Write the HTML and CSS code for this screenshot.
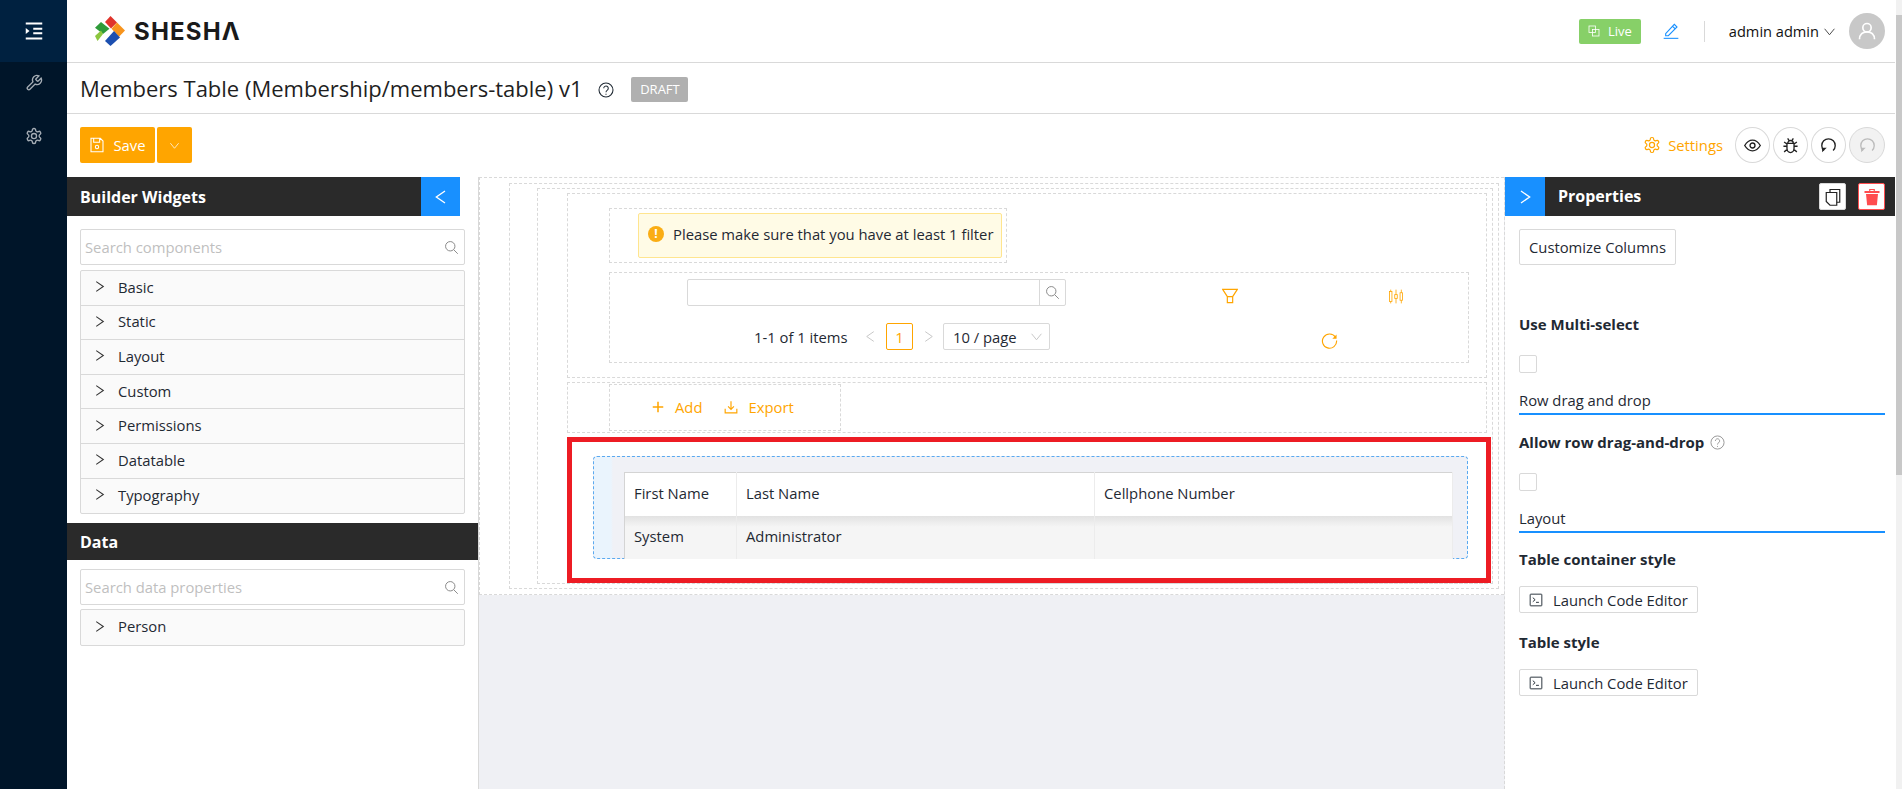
FILE: index.html
```html
<!DOCTYPE html>
<html lang="en">
<head>
  <meta charset="UTF-8" />
  <title>Members Table</title>
  <link rel="stylesheet" href="styles.css">
</head>
<body>

  <svg class="sprite" xmlns="http://www.w3.org/2000/svg">
    <symbol id="i-search" viewBox="0 0 24 24"><circle cx="10" cy="10" r="7.5"/><path d="M15.5 15.5 22 22"/></symbol>
    <symbol id="i-right" viewBox="0 0 24 24"><path d="M6 3l13 9-13 9"/></symbol>
    <symbol id="i-left" viewBox="0 0 24 24"><path d="M18 3 5 12l13 9"/></symbol>
    <symbol id="i-down" viewBox="0 0 24 24"><path d="M3 7l9 11 9-11"/></symbol>
    <symbol id="i-gear" viewBox="0 0 24 24"><path d="M12.22 2h-.44a2 2 0 0 0-2 2v.18a2 2 0 0 1-1 1.73l-.43.25a2 2 0 0 1-2 0l-.15-.08a2 2 0 0 0-2.73.73l-.22.38a2 2 0 0 0 .73 2.73l.15.1a2 2 0 0 1 1 1.72v.51a2 2 0 0 1-1 1.74l-.15.09a2 2 0 0 0-.73 2.73l.22.38a2 2 0 0 0 2.73.73l.15-.08a2 2 0 0 1 2 0l.43.25a2 2 0 0 1 1 1.73V20a2 2 0 0 0 2 2h.44a2 2 0 0 0 2-2v-.18a2 2 0 0 1 1-1.73l.43-.25a2 2 0 0 1 2 0l.15.08a2 2 0 0 0 2.73-.73l.22-.39a2 2 0 0 0-.73-2.73l-.15-.08a2 2 0 0 1-1-1.74v-.5a2 2 0 0 1 1-1.74l.15-.09a2 2 0 0 0 .73-2.73l-.22-.38a2 2 0 0 0-2.73-.73l-.15.08a2 2 0 0 1-2 0l-.43-.25a2 2 0 0 1-1-1.73V4a2 2 0 0 0-2-2z"/><circle cx="12" cy="12" r="3.4"/></symbol>
    <symbol id="i-help" viewBox="0 0 24 24"><circle cx="12" cy="12" r="10.5"/><path d="M8.6 9.4a3.4 3.4 0 1 1 5.4 2.8c-1.3.9-2 1.500-2 3"/><path d="M12 17.500v1.500"/></symbol>
    <symbol id="i-terminal" viewBox="0 0 24 24"><rect x="2" y="2" width="20" height="20" rx="1"/><path d="M6.500 8l4 3.500-4 3.500M12 16h5"/></symbol>
    <symbol id="i-reload" viewBox="0 0 24 24"><path d="M20.500 7.500A10 10 0 1 0 22 12"/><path class="solid" d="M22 3.500v6h-6z"/></symbol>
    <symbol id="i-undo" viewBox="0 0 24 24"><path d="M5.500 19a9.500 9.500 0 1 1 13 0"/><path class="solid" d="M3 21.500v-6.500h6.500z"/></symbol>
  </svg>

  <div class="app">

    <nav class="rail">
      <div class="rail-top">
        <svg class="rail-icon menu" viewBox="0 0 24 24"><path d="M1 2h22M11 9h12M11 15h12M1 22h22"/><path class="solid" d="M1 8l5 4-5 4z"/></svg>
      </div>
      <svg class="rail-icon dim" viewBox="0 0 24 24"><path d="M14.700 6.300a1 1 0 0 0 0 1.400l1.600 1.600a1 1 0 0 0 1.400 0l3.770-3.770a6 6 0 0 1-7.940 7.940l-6.910 6.910a2.120 2.120 0 0 1-3-3l6.910-6.910a6 6 0 0 1 7.940-7.940l-3.760 3.760z"/></svg>
      <svg class="rail-icon dim" viewBox="0 0 24 24"><use href="#i-gear"/></svg>
    </nav>

    <main class="main">

      <header class="topbar">
        <div class="brand">
          <svg class="logo" viewBox="0 0 30 30">
            <path fill="#e0342b" d="M15.500 0 22 6.500 16 12.500 10 6z"/>
            <path fill="#f7941d" d="M22 6.500 30 14.500 24 20.700 16.500 12.700z"/>
            <path fill="#2f9b3a" d="M0 11.700 6 6 14.500 12.700 8 18z"/>
            <path fill="#8cc63f" d="M0 20 6 14.500 8 18 2.500 25z"/>
            <path fill="#1c4fb0" d="M10 25 19 15 25 21.400 15.500 30z"/>
          </svg>
          <span class="brand-name">SHESHΛ</span>
        </div>
        <div class="topbar-right">
          <span class="live">
            <svg viewBox="0 0 24 24"><rect x="2" y="2" width="13" height="13"/><rect x="9" y="9" width="13" height="13"/></svg>
            Live
          </span>
          <svg class="edit" viewBox="0 0 24 24"><path d="M4 16 17 2l4 4L8 19H4zM14.500 5l4 4"/><path d="M1 23h22"/></svg>
          <span class="vline"></span>
          <span class="user">admin admin</span>
          <svg class="user-caret" viewBox="0 0 24 24"><use href="#i-down"/></svg>
          <span class="avatar">
            <svg viewBox="0 0 24 24"><circle cx="12" cy="8" r="5"/><path d="M3 22c0-6 4-9 9-9s9 3 9 9"/></svg>
          </span>
        </div>
      </header>

      <div class="titlebar">
        <h1>Members Table (Membership/members-table) v1</h1>
        <svg class="title-help" viewBox="0 0 24 24"><use href="#i-help"/></svg>
        <span class="draft">DRAFT</span>
      </div>

      <div class="toolbar">
        <div class="save-group">
          <button class="btn-save">
            <svg viewBox="0 0 24 24"><path d="M3 2h14l4 4v16H3zM7 2v6h9V2"/><circle cx="12" cy="15" r="2.500"/></svg>
            Save
          </button>
          <button class="btn-save-more"><svg viewBox="0 0 24 24"><use href="#i-down"/></svg></button>
        </div>
        <div class="toolbar-right">
          <span class="settings">
            <svg viewBox="0 0 24 24"><use href="#i-gear"/></svg>
            Settings
          </span>
          <button class="round">
            <svg viewBox="0 0 24 24"><path d="M1 12c3-5 7-7.500 11-7.500S20 7 23 12c-3 5-7 7.500-11 7.500S4 17 1 12z"/><circle cx="12" cy="12" r="3.500"/></svg>
          </button>
          <button class="round">
            <svg viewBox="0 0 24 24"><path d="M7 9h10v7a5 6 0 0 1-10 0zM8 9a4 4 0 0 1 8 0M2 13h5M17 13h5M3 7l4 3M21 7l-4 3M3 21l5-4M21 21l-5-4M8 2l2 3M16 2l-2 3"/></svg>
          </button>
          <button class="round"><svg viewBox="0 0 24 24"><use href="#i-undo"/></svg></button>
          <button class="round off"><svg viewBox="0 0 24 24"><use href="#i-undo"/></svg></button>
        </div>
      </div>

      <div class="builder">

        <aside class="widgets">
          <div class="panel-head">
            <span class="panel-title">Builder Widgets</span>
            <span class="panel-toggle"><svg viewBox="0 0 24 24"><use href="#i-left"/></svg></span>
          </div>
          <div class="widgets-body">
            <div class="search">
              <span>Search components</span>
              <svg viewBox="0 0 24 24"><use href="#i-search"/></svg>
            </div>
            <ul class="group-list">
              <li><svg viewBox="0 0 24 24"><use href="#i-right"/></svg>Basic</li>
              <li><svg viewBox="0 0 24 24"><use href="#i-right"/></svg>Static</li>
              <li><svg viewBox="0 0 24 24"><use href="#i-right"/></svg>Layout</li>
              <li><svg viewBox="0 0 24 24"><use href="#i-right"/></svg>Custom</li>
              <li><svg viewBox="0 0 24 24"><use href="#i-right"/></svg>Permissions</li>
              <li><svg viewBox="0 0 24 24"><use href="#i-right"/></svg>Datatable</li>
              <li><svg viewBox="0 0 24 24"><use href="#i-right"/></svg>Typography</li>
            </ul>
          </div>
          <div class="data-head">Data</div>
          <div class="widgets-body data-body">
            <div class="search">
              <span>Search data properties</span>
              <svg viewBox="0 0 24 24"><use href="#i-search"/></svg>
            </div>
            <ul class="group-list">
              <li><svg viewBox="0 0 24 24"><use href="#i-right"/></svg>Person</li>
            </ul>
          </div>
        </aside>

        <section class="stage">
          <div class="canvas">
            <div class="zone zone-one">
              <div class="zone zone-two">

                <div class="zone zone-filters">
                  <div class="zone alert-zone">
                    <div class="alert">
                      <span class="alert-icon">!</span>
                      Please make sure that you have at least 1 filter
                    </div>
                  </div>
                  <div class="zone controls-zone">
                    <div class="controls-row">
                      <div class="quick-search">
                        <span class="quick-input"></span>
                        <span class="quick-btn"><svg viewBox="0 0 24 24"><use href="#i-search"/></svg></span>
                      </div>
                      <svg class="filter-icon" viewBox="0 0 24 24"><path d="M1 2h22l-7 11H8zM8 13h8v9H8z"/></svg>
                      <svg class="columns-icon" viewBox="0 0 24 24"><path d="M3.500 1v3M3.500 20v3M12 1v8M12 15v8M20.500 1v5M20.500 18v5"/><rect x="1.500" y="4" width="4" height="16"/><rect x="10" y="9" width="4" height="6"/><rect x="18.500" y="6" width="4" height="12"/></svg>
                    </div>
                    <div class="pager-row">
                      <span class="pager-total">1-1 of 1 items</span>
                      <svg class="pager-arrow" viewBox="0 0 24 24"><use href="#i-left"/></svg>
                      <span class="pager-page">1</span>
                      <svg class="pager-arrow" viewBox="0 0 24 24"><use href="#i-right"/></svg>
                      <span class="pager-size">10 / page<svg viewBox="0 0 24 24"><use href="#i-down"/></svg></span>
                      <svg class="reload-icon" viewBox="0 0 24 24"><use href="#i-reload"/></svg>
                    </div>
                  </div>
                </div>

                <div class="zone zone-actions">
                  <div class="zone actions-zone">
                    <span class="action">
                      <svg class="plus" viewBox="0 0 24 24"><path d="M12 3v18M3 12h18"/></svg>
                      Add
                    </span>
                    <span class="action">
                      <svg viewBox="0 0 24 24"><path d="M12 2v14M7 11l5 5 5-5M2 15v7h20v-7"/></svg>
                      Export
                    </span>
                  </div>
                </div>

                <div class="zone zone-table">
                  <div class="table-drop">
                    <table class="grid">
                      <thead>
                        <tr><th class="col-first">First Name</th><th class="col-last">Last Name</th><th>Cellphone Number</th></tr>
                      </thead>
                      <tbody>
                        <tr><td>System</td><td>Administrator</td><td></td></tr>
                      </tbody>
                    </table>
                  </div>
                  <div class="red-mark"></div>
                </div>

              </div>
            </div>
          </div>
        </section>

        <aside class="props">
          <div class="panel-head">
            <span class="panel-toggle wide"><svg viewBox="0 0 24 24"><use href="#i-right"/></svg></span>
            <span class="panel-title">Properties</span>
            <span class="head-btn">
              <svg viewBox="0 0 24 24"><path d="M8 6V2h13v17h-4"/><path d="M3 6h14v17H8l-5-5z"/></svg>
            </span>
            <span class="head-btn danger">
              <svg viewBox="0 0 24 24"><path class="solid" d="M4 8h16l-1.500 15h-13zM2 4h20v2.500H2z"/><path d="M9 4V2h6v2"/></svg>
            </span>
          </div>
          <div class="props-body">
            <button class="btn-plain tall">Customize Columns</button>
            <div class="prop-label first">Use Multi-select</div>
            <span class="check"></span>
            <div class="prop-section">Row drag and drop</div>
            <div class="prop-label">Allow row drag-and-drop <svg class="prop-help" viewBox="0 0 24 24"><use href="#i-help"/></svg></div>
            <span class="check"></span>
            <div class="prop-section">Layout</div>
            <div class="prop-label for-btn">Table container style</div>
            <button class="btn-plain"><svg viewBox="0 0 24 24"><use href="#i-terminal"/></svg>Launch Code Editor</button>
            <div class="prop-label for-btn">Table style</div>
            <button class="btn-plain"><svg viewBox="0 0 24 24"><use href="#i-terminal"/></svg>Launch Code Editor</button>
          </div>
        </aside>

      </div>
    </main>

    <div class="scrollbar"><div class="scroll-thumb"></div></div>
  </div>

</body>
</html>
```

FILE: styles.css
```css
* {
  box-sizing: border-box;
}
html, body {
  margin: 0;
  height: 100%;
  overflow: hidden;
}
body {
  font-family: 'Open Sans', 'Noto Sans', sans-serif;
  font-size: 14.8px;
  color: #1f2933;
  background: #fff;
}
svg {
  fill: none;
  stroke: currentColor;
  stroke-width: 1.6;
  display: block;
}
svg .solid {
  fill: currentColor;
  stroke: none;
}
.sprite {
  display: none;
}
button {
  font: inherit;
  margin: 0;
  cursor: pointer;
}
ul {
  list-style: none;
  margin: 0;
  padding: 0;
}

.app {
  display: flex;
  height: 789px;
}

/* left rail */
.rail {
  width: 67px;
  flex: none;
  background: #001529;
  color: #fff;
}
.rail-top {
  height: 62px;
  background: #002140;
  display: flex;
  align-items: center;
  justify-content: center;
  margin-bottom: 12px;
}
.rail-icon {
  width: 18px;
  height: 18px;
  stroke-width: 1.8;
}
.rail-icon.menu {
  stroke-width: 2.4;
}
.rail-icon.dim {
  color: #a5adb5;
  margin: 0 auto 35px;
}

.main {
  flex: 1;
  min-width: 0;
  display: flex;
  flex-direction: column;
}

/* top bar */
.topbar {
  height: 63px;
  flex: none;
  border-bottom: 1px solid #d9d9d9;
  display: flex;
  align-items: center;
  justify-content: space-between;
  padding: 0 10px 0 28px;
}
.brand {
  display: flex;
  align-items: center;
  gap: 9px;
}
.logo {
  width: 30px;
  height: 30px;
  stroke: none;
}
.brand-name {
  font-family: 'Inter', sans-serif;
  font-weight: 700;
  font-size: 24px;
  letter-spacing: 1.2px;
  color: #1a1a1a;
}
.topbar-right {
  display: flex;
  align-items: center;
}
.live {
  width: 62px;
  height: 25px;
  background: #87d068;
  color: #fff;
  border-radius: 2px;
  font-size: 13px;
  display: flex;
  align-items: center;
  justify-content: center;
  gap: 8px;
}
.live svg {
  width: 12px;
  height: 12px;
}
.edit {
  width: 16px;
  height: 16px;
  color: #1890ff;
  margin: 0 25px 0 22px;
}
.vline {
  width: 1px;
  height: 21px;
  background: #d9d9d9;
  margin-right: 24px;
}
.user {
  color: #111;
  font-size: 14.6px;
}
.user-caret {
  width: 13px;
  height: 13px;
  margin: 0 13px 0 4px;
  color: #333;
}
.avatar {
  width: 36px;
  height: 36px;
  border-radius: 50%;
  background: #c8c8c8;
  color: #fff;
  display: flex;
  align-items: center;
  justify-content: center;
}
.avatar svg {
  width: 20px;
  height: 20px;
  stroke-width: 2;
}

/* title */
.titlebar {
  height: 51px;
  flex: none;
  border-bottom: 1px solid #d9d9d9;
  display: flex;
  align-items: center;
  padding-left: 13px;
}
h1 {
  margin: 0;
  font-size: 22px;
  font-weight: 500;
  color: #1f1f1f;
  white-space: nowrap;
}
.title-help {
  width: 16px;
  height: 16px;
  margin: 4px 0 0 16px;
}
.draft {
  margin: 2px 0 0 17px;
  width: 57px;
  height: 25px;
  background: #b0b0b0;
  color: #fff;
  font-size: 13px;
  border-radius: 2px;
  display: flex;
  align-items: center;
  justify-content: center;
}

/* toolbar */
.toolbar {
  height: 63px;
  flex: none;
  display: flex;
  align-items: flex-start;
  justify-content: space-between;
  padding: 13px 10px 0 13px;
}
.save-group {
  display: flex;
  gap: 2px;
}
.btn-save, .btn-save-more {
  height: 36px;
  padding: 0;
  background: #ffa500;
  color: #fff;
  border: 0;
  border-radius: 2px;
  display: flex;
  align-items: center;
  justify-content: center;
}
.btn-save {
  width: 75px;
  gap: 8px;
}
.btn-save svg {
  width: 16px;
  height: 16px;
}
.btn-save-more {
  width: 35px;
}
.btn-save-more svg {
  width: 11px;
  height: 11px;
}
.toolbar-right {
  display: flex;
  align-items: center;
  gap: 3px;
}
.settings {
  color: #ffa500;
  display: flex;
  align-items: center;
  gap: 7px;
  margin-right: 9px;
}
.settings svg {
  width: 18px;
  height: 18px;
}
.round {
  width: 35px;
  height: 36px;
  padding: 0;
  border-radius: 50%;
  border: 1px solid #d9d9d9;
  background: #fff;
  color: #222;
  display: flex;
  align-items: center;
  justify-content: center;
}
.round svg {
  width: 17px;
  height: 17px;
  stroke-width: 1.9;
}
.round.off {
  width: 36px;
  background: #f2f2f2;
  color: #bbb;
}

/* builder row */
.builder {
  flex: 1;
  display: flex;
  min-height: 0;
}
.panel-head {
  height: 39px;
  flex: none;
  background: #2a2a2a;
  color: #fff;
  display: flex;
  align-items: center;
}
.panel-title {
  font-weight: 700;
  font-size: 16px;
}
.panel-toggle {
  width: 39px;
  height: 39px;
  background: #1890ff;
  display: flex;
  align-items: center;
  justify-content: center;
}
.panel-toggle.wide {
  width: 40px;
  margin-right: 13px;
}
.panel-toggle svg {
  width: 16px;
  height: 16px;
  stroke-width: 2;
}

/* widgets panel */
.widgets {
  width: 412px;
  flex: none;
  border-right: 1px solid #d9d9d9;
}
.widgets > .panel-head {
  width: 393px;
  justify-content: space-between;
  padding-left: 13px;
}
.widgets-body {
  padding: 13px 13px 9px;
}
.search {
  height: 36px;
  border: 1px solid #d9d9d9;
  border-radius: 2px;
  display: flex;
  align-items: center;
  justify-content: space-between;
  padding: 0 5px 0 4px;
  color: #bfbfbf;
}
.search svg {
  width: 15px;
  height: 15px;
  color: #8c8c8c;
}
.group-list {
  margin-top: 5px;
  border: 1px solid #d9d9d9;
  border-radius: 2px;
  background: #fafafa;
}
.group-list li {
  height: 34.600px;
  display: flex;
  align-items: center;
  padding: 0 0 2px 12px;
  border-bottom: 1px solid #d9d9d9;
}
.group-list li:last-child {
  border-bottom: 0;
}
.group-list li svg {
  width: 13px;
  height: 13px;
  margin-right: 12px;
  color: #333;
  stroke-width: 2;
}
.data-head {
  height: 37px;
  background: #2a2a2a;
  color: #fff;
  font-weight: 700;
  font-size: 16px;
  display: flex;
  align-items: center;
  padding-left: 13px;
}
.data-body {
  padding-top: 9px;
}
.data-body .group-list {
  margin-top: 4px;
}

/* canvas */
.stage {
  flex: 1;
  min-width: 0;
  background: #eff0f4;
  border-right: 1px dashed #d9d9d9;
}
.canvas {
  height: 418px;
  background: #fff;
  border: 1px dashed #d9d9d9;
  border-right: 0;
  padding: 5px 5px 5px 29px;
}
.zone {
  border: 1px dashed #d9d9d9;
}
.zone-one {
  height: 100%;
  padding: 4px 5px 4px 27px;
}
.zone-two {
  height: 100%;
  padding: 4px 5px 0 29px;
}
.zone-filters {
  height: 185px;
  padding: 14px 17px 0 41px;
}
.alert-zone {
  width: 398px;
  height: 55px;
  padding: 4px 4px 0 28px;
}
.alert {
  height: 45px;
  background: #fffbe6;
  border: 1px solid #ffe58f;
  border-radius: 2px;
  display: flex;
  align-items: center;
  padding: 0 0 4px 9px;
  gap: 9px;
  white-space: nowrap;
}
.alert-icon {
  width: 16px;
  height: 16px;
  border-radius: 50%;
  background: #faad14;
  color: #fff;
  font-size: 12px;
  font-weight: 700;
  display: flex;
  align-items: center;
  justify-content: center;
}
.controls-zone {
  margin-top: 9px;
  height: 91px;
  padding: 6px 0 0 77px;
}
.controls-row {
  display: flex;
  align-items: flex-start;
  height: 34px;
}
.quick-search {
  width: 379px;
  height: 27px;
  display: flex;
  border: 1px solid #d9d9d9;
  border-radius: 2px;
}
.quick-input {
  flex: 1;
}
.quick-btn {
  width: 26px;
  border-left: 1px solid #d9d9d9;
  display: flex;
  align-items: center;
  justify-content: center;
  color: #8c8c8c;
}
.quick-btn svg {
  width: 15px;
  height: 15px;
}
.filter-icon, .columns-icon, .reload-icon {
  color: #ffa500;
}
.filter-icon {
  width: 16px;
  height: 16px;
  margin: 9px 0 0 156px;
  stroke-width: 1.8;
}
.columns-icon {
  width: 16px;
  height: 15px;
  margin: 10px 0 0 150px;
  stroke-width: 1.3;
}
.pager-row {
  display: flex;
  align-items: center;
  height: 27px;
  margin-top: 10px;
  padding-left: 67px;
}
.pager-total {
  width: 110px;
  white-space: nowrap;
}
.pager-arrow {
  width: 13px;
  height: 13px;
  color: #bfbfbf;
  stroke-width: 1.6;
}
.pager-page {
  width: 27px;
  height: 27px;
  border: 1px solid #ffa500;
  border-radius: 2px;
  color: #ffa500;
  margin: 0 9px;
  display: flex;
  align-items: center;
  justify-content: center;
}
.pager-size {
  width: 107px;
  height: 27px;
  margin-left: 8px;
  border: 1px solid #d9d9d9;
  border-radius: 2px;
  display: flex;
  align-items: center;
  justify-content: space-between;
  padding: 0 6px 0 9px;
}
.pager-size svg {
  width: 13px;
  height: 13px;
  color: #bfbfbf;
}
.reload-icon {
  width: 17px;
  height: 17px;
  margin: 8px 0 0 271px;
}
.zone-actions {
  margin-top: 4px;
  height: 51px;
  padding: 1px 0 0 41px;
}
.actions-zone {
  width: 232px;
  height: 47px;
  display: flex;
  align-items: center;
  padding: 0 0 2px 41px;
  gap: 22px;
}
.action {
  color: #ffa500;
  display: flex;
  align-items: center;
  gap: 10px;
}
.action svg {
  width: 14px;
  height: 14px;
  stroke-width: 2;
}
.action .plus {
  stroke-width: 2.6;
}

/* table drop zone */
.zone-table {
  position: relative;
  margin-top: 4px;
  height: 147px;
  padding: 18px 18px 0 25px;
}
.table-drop {
  height: 103px;
  border: 1px dashed #5aa9f0;
  border-radius: 4px;
  background: linear-gradient(90deg, #eaf4fd 17px, #f0f1f6 19px);
  padding: 15px 15px 0 30px;
}
.grid {
  width: 829px;
  height: 86px;
  border-collapse: collapse;
  table-layout: fixed;
  border: 1px solid #d4d4d4;
  border-bottom: 0;
}
.grid th, .grid td {
  font-weight: 400;
  text-align: left;
  padding: 0 9px 2px;
  border-right: 1px solid #ececec;
}
.col-first {
  width: 112px;
}
.col-last {
  width: 358px;
}
.grid thead tr {
  height: 43px;
  background: #fff;
}
.grid tbody tr {
  height: 43px;
  background: linear-gradient(#e2e2e2, #f5f5f5 11px);
}
.red-mark {
  position: absolute;
  inset: -1px -5px 0 -1px;
  border: 5px solid #ed1c24;
  pointer-events: none;
}

/* properties panel */
.props {
  width: 390px;
  flex: none;
}
.props .panel-head {
  padding-right: 10px;
}
.props .panel-title {
  flex: 1;
  padding-bottom: 2px;
}
.head-btn {
  width: 27px;
  height: 27px;
  background: #fff;
  border: 1px solid #d9d9d9;
  border-radius: 2px;
  color: #222;
  display: flex;
  align-items: center;
  justify-content: center;
  margin-left: 12px;
}
.head-btn svg {
  width: 18px;
  height: 18px;
}
.head-btn.danger {
  border-color: #ff4d4f;
  color: #ff4d4f;
}
.props-body {
  padding: 13px 10px 0 14px;
}
.btn-plain {
  height: 27px;
  padding: 0 9px;
  background: #fff;
  border: 1px solid #d9d9d9;
  border-radius: 2px;
  color: #1f2933;
  display: flex;
  align-items: center;
  gap: 10px;
}
.btn-plain svg {
  width: 14px;
  height: 14px;
}
.btn-plain.tall {
  height: 36px;
}
.prop-label {
  font-weight: 700;
  font-size: 15px;
  margin: 16px 0 20px;
  line-height: 22px;
  display: flex;
  align-items: center;
  gap: 6px;
}
.prop-label.first {
  margin-top: 48px;
}
.prop-label.for-btn {
  margin: 15px 0 16px;
}
.btn-plain + .prop-label.for-btn {
  margin-top: 18px;
}
.prop-help {
  width: 15px;
  height: 15px;
  color: #8c8c8c;
  stroke-width: 1.4;
}
.check {
  display: block;
  width: 18px;
  height: 18px;
  border: 1px solid #d9d9d9;
  border-radius: 2px;
}
.prop-section {
  margin-top: 14px;
  height: 28px;
  line-height: 26px;
  border-bottom: 2px solid #1890ff;
}

.scrollbar {
  width: 7px;
  flex: none;
  background: #f1f1f1;
  border-left: 1px solid #fff;
  padding-top: 15px;
}
.scroll-thumb {
  height: 460px;
  background: #c8c8c8;
}
```
